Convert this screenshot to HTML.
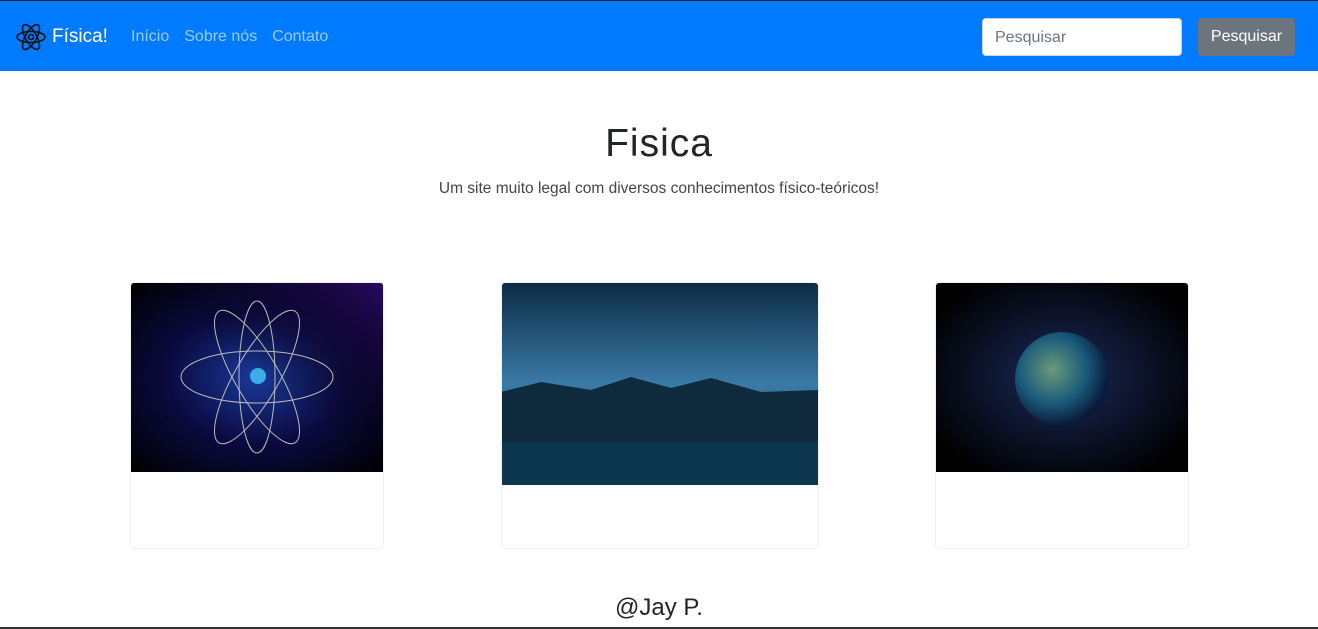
<!DOCTYPE html>
<html><head><meta charset="utf-8"><style>
*{box-sizing:border-box;margin:0;padding:0}
body{width:1318px;height:629px;overflow:hidden;background:#fff;font-family:"Liberation Sans",sans-serif;position:relative;color:#212529}
.nav{position:absolute;top:0;left:0;width:1318px;height:71px;background:#007bff;border-top:1px solid #222}
.brand{position:absolute;left:52px;top:25px;color:#fff;font-size:19px}
.links{position:absolute;left:131px;top:27px;color:rgba(255,255,255,.6);font-size:16px}
.links span{margin-right:15px}
.inp{position:absolute;left:982px;top:17px;width:200px;height:38px;background:#fff;border:1px solid #ced4da;border-radius:4px;color:#6c757d;font-size:16px;padding:10px 12px}
.btn{position:absolute;left:1198px;top:17px;width:97px;height:38px;background:#6c757d;border-radius:4px;color:#fff;font-size:16px;padding:10px 0;text-align:center}
h1{position:absolute;top:122px;width:100%;text-align:center;font-weight:400;font-size:39px;letter-spacing:1px}
.sub{position:absolute;top:180px;width:100%;text-align:center;font-size:15.5px;color:#444}
.card{position:absolute;border:1px solid #f0f0f0;border-radius:4px;overflow:hidden}
.card svg{position:absolute;left:-1px;top:-1px}
.foot{position:absolute;top:594px;width:100%;text-align:center;font-size:24px}
.bl{position:absolute;bottom:0;left:0;width:100%;height:2px;background:#333}
</style></head><body>
<div class="nav">
<svg style="position:absolute;left:16px;top:20px" width="30" height="32" viewBox="0 0 30 32" fill="none" stroke="#111" stroke-width="1.6"><ellipse cx="15" cy="16" rx="14" ry="5.5"/><ellipse cx="15" cy="16" rx="14" ry="5.5" transform="rotate(60 15 16)"/><ellipse cx="15" cy="16" rx="14" ry="5.5" transform="rotate(-60 15 16)"/><circle cx="15" cy="16" r="2.5"/></svg>
<div class="brand">Física!</div>
<div class="links"><span>Início</span><span>Sobre nós</span><span>Contato</span></div>
<div class="inp">Pesquisar</div>
<div class="btn">Pesquisar</div>
</div>
<h1>Fisica</h1>
<div class="sub">Um site muito legal com diversos conhecimentos físico-teóricos!</div>
<div class="card" style="left:130px;top:282px;width:254px;height:267px">
<svg width="254" height="190"><defs><radialGradient id="g1" cx="50%" cy="50%" r="70%"><stop offset="0" stop-color="#1a3a9a"/><stop offset=".5" stop-color="#0a0a40"/><stop offset="1" stop-color="#000"/></radialGradient><linearGradient id="g0" x1="0" y1="1" x2="1" y2="0"><stop offset=".5" stop-color="#000" stop-opacity="0"/><stop offset="1" stop-color="#2a0a6a"/></linearGradient></defs><rect width="254" height="190" fill="url(#g1)"/><rect width="254" height="190" fill="url(#g0)"/><g fill="none" stroke="#bbb" stroke-width="1"><ellipse cx="127" cy="95" rx="76" ry="26"/><ellipse cx="127" cy="95" rx="76" ry="22" transform="rotate(60 127 95)"/><ellipse cx="127" cy="95" rx="76" ry="22" transform="rotate(-60 127 95)"/><ellipse cx="127" cy="95" rx="18" ry="76"/></g><circle cx="128" cy="94" r="8" fill="#4cf" opacity=".8"/></svg>
</div>
<div class="card" style="left:501px;top:282px;width:318px;height:267px">
<svg width="318" height="203"><defs><linearGradient id="s" x1="0" y1="0" x2="0" y2="1"><stop offset="0" stop-color="#0c2a44"/><stop offset=".5" stop-color="#3a7aa6"/><stop offset="1" stop-color="#1a4a6a"/></linearGradient></defs><rect width="318" height="203" fill="url(#s)"/><path d="M0 110 L40 100 L90 108 L130 95 L170 106 L210 96 L260 110 L318 108 L318 160 L0 160Z" fill="#0f2a3c"/><rect y="160" width="318" height="43" fill="#0c3550"/></svg>
</div>
<div class="card" style="left:935px;top:282px;width:254px;height:267px">
<svg width="254" height="190"><defs><radialGradient id="e" cx="40%" cy="40%" r="60%"><stop offset="0" stop-color="#6a9a7a"/><stop offset=".6" stop-color="#1a5a7a"/><stop offset="1" stop-color="#0a1a3a"/></radialGradient><radialGradient id="b" cx="50%" cy="50%" r="60%"><stop offset="0" stop-color="#1a2a5a"/><stop offset="1" stop-color="#000"/></radialGradient></defs><rect width="254" height="190" fill="url(#b)"/><circle cx="127" cy="97" r="47" fill="url(#e)"/></svg>
</div>
<div class="foot">@Jay P.</div>
<div class="bl"></div>
</body></html>
